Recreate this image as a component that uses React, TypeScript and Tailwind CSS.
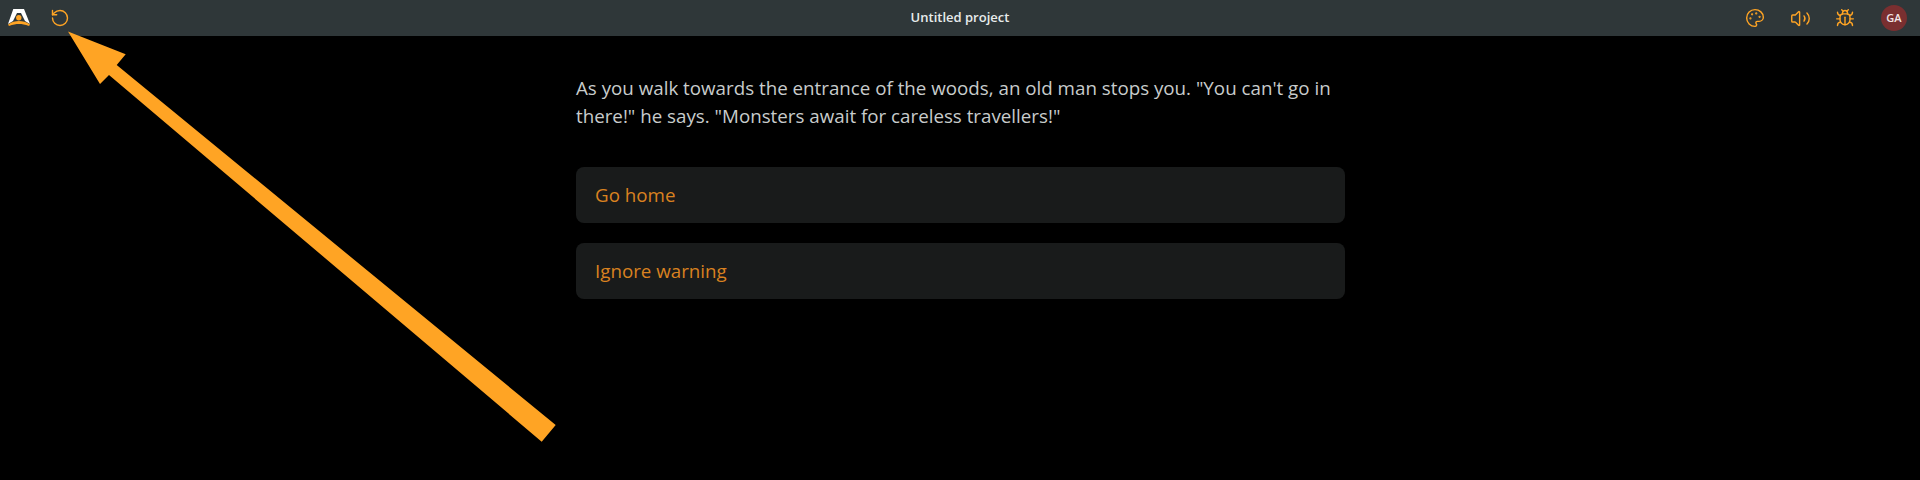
import React from 'react';
import { RotateCcw, Palette, Volume2, Bug } from 'lucide-react';

const Logo: React.FC = () => (
    <svg width="22" height="18" viewBox="0 0 22 18" className="block">
        <path d="M5.300 0H16l6 15-5-3-4-8H9l-4 8-5 3z" fill="#ffffff" />
        <circle cx="10.800" cy="8.700" r="2.700" fill="#ffa424" />
        <path d="M0 15.500C4 12.500 7 12 11 12s7 .5 11 3.500L21 17c-4-1.500-7-2-10-2s-6 .5-10 2z" fill="#ffa424" />
    </svg>
);

export default function App() {
    return (
        <div className="relative w-[1920px] h-[480px] bg-black overflow-hidden font-['Open_Sans',sans-serif]">
            <header className="h-[36px] bg-[#2f3739] flex items-center justify-between relative">
                <div className="flex items-center pl-[8px]">
                    <Logo />
                    <RotateCcw className="w-[20px] h-[20px] ml-[20px] text-[#ffa424]" strokeWidth={1.7} />
                </div>
                <div className="absolute left-0 right-0 text-center text-[13px] font-semibold text-[#e8ecec]">Untitled project</div>
                <div className="flex items-center pr-[13px]">
                    <Palette className="w-[20px] h-[20px] text-[#ffa424]" strokeWidth={1.7} />
                    <Volume2 className="w-[21px] h-[21px] ml-[25px] text-[#ffa424]" strokeWidth={1.6} />
                    <Bug className="w-[20px] h-[20px] ml-[24px] text-[#ffa424]" strokeWidth={1.7} />
                    <div className="w-[26px] h-[26px] ml-[26px] rounded-full bg-[#7a2f30] text-[#f1e6e6] text-[11px] font-semibold flex items-center justify-center">GA</div>
                </div>
            </header>

            <main className="w-[769px] ml-[576px] pt-[38px]">
                <p className="text-[18.75px] leading-[27.5px] text-[#c8cccc]">
                    As you walk towards the entrance of the woods, an old man stops you. "You can't go in there!" he says. "Monsters await for careless travellers!"
                </p>
                <div className="mt-[38px] flex flex-col gap-[20px]">
                    <ChoiceButton label="Go home" />
                    <ChoiceButton label="Ignore warning" />
                </div>
            </main>

            {/* annotation arrow */}
            <svg className="absolute left-0 top-0" width="1920" height="480" viewBox="0 0 1920 480">
                <polygon points="68,31.500 125.700,54.300 116.700,65 555.700,425 541.700,441.700 109,75 100,84" fill="#ffa424" />
            </svg>
        </div>
    );
}

function ChoiceButton({ label }: { label: string }) {
    return (
        <div className="h-[56px] rounded-lg bg-[#191b1b] px-[19px] flex items-center text-[18.75px] text-[#d98220]">{label}</div>
    );
}
